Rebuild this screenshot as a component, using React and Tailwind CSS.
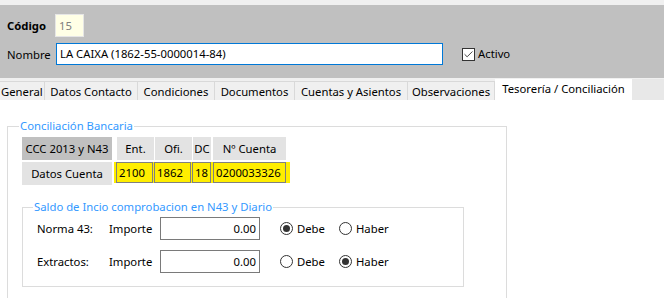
import { Check } from 'lucide-react';

const tabs = [
  { label: 'General', w: 'w-[45px] justify-start pl-[1px]' },
  { label: 'Datos Contacto', w: 'w-[93px] justify-center' },
  { label: 'Condiciones', w: 'w-[77px] justify-center' },
  { label: 'Documentos', w: 'w-[80px] justify-center' },
  { label: 'Cuentas y Asientos', w: 'w-[113px] justify-center' },
  { label: 'Observaciones', w: 'w-[87px] justify-center' },
];

function Radio({ checked, label }) {
  return (
    <div className="flex items-center gap-[4px]">
      <span className="w-[13px] h-[13px] rounded-full border border-[#333] bg-white flex items-center justify-center">
        {checked && <span className="w-[7px] h-[7px] rounded-full bg-[#333]" />}
      </span>
      <span>{label}</span>
    </div>
  );
}

function SaldoRow({ label, debe }) {
  return (
    <div className="flex items-center h-[23px]">
      <span className="w-[72px]">{label}</span>
      <span className="w-[51px]">Importe</span>
      <div className="w-[100px] h-[23px] border border-[#7a7a7a] bg-white flex items-center justify-end pr-[3px]">0.00</div>
      <div className="ml-[20px] w-[59px]">
        <Radio checked={debe} label="Debe" />
      </div>
      <Radio checked={!debe} label="Haber" />
    </div>
  );
}

export default function App() {
  return (
    <div className="w-[664px] h-[298px] overflow-hidden bg-white text-[11.3px] leading-[16px] text-black" style={{ fontFamily: '"Noto Sans", "Open Sans", sans-serif' }}>
      {/* top strip */}
      <div className="h-[5px] bg-[#f0f0f0]" />

      {/* header */}
      <div className="h-[73px] bg-[#c0c0c0] px-[7px] pt-[9px]">
        <div className="flex items-center h-[23px]">
          <span className="w-[48px] font-bold pt-[1px]">Código</span>
          <div className="w-[29px] h-[23px] bg-[#ffffe6] border border-[#e6e6e6] flex items-center pl-[3px] pt-[1px] text-[#808080]">15</div>
        </div>
        <div className="flex items-center h-[22px] mt-[6px]">
          <span className="w-[49px] pt-[1px]">Nombre</span>
          <div className="w-[387px] h-[22px] bg-white border border-[#0078d7] flex items-center pl-[3px]">LA CAIXA (1862-55-0000014-84)</div>
          <div className="ml-[19px] flex items-center gap-[3px]">
            <span className="w-[13px] h-[13px] border border-[#333] bg-white flex items-center justify-center">
              <Check className="w-[11px] h-[11px] text-[#333]" strokeWidth={2} />
            </span>
            <span>Activo</span>
          </div>
        </div>
      </div>

      {/* tabs */}
      <div className="h-[22px] bg-[#f0f0f0] flex items-end">
        <div className="flex">
          {tabs.map((t) => (
            <div key={t.label} className={`${t.w} h-[19px] border-r border-t border-[#d9d9d9] bg-[#f0f0f0] flex items-center pt-[1px]`}>
              {t.label}
            </div>
          ))}
        </div>
        <div className="w-[137px] h-[21px] bg-white flex items-center justify-center pb-[2px]">Tesorería / Conciliación</div>
        <div className="flex-1 h-[21px] bg-[#e8e8e8]" />
      </div>

      {/* content */}
      <div className="pl-[7px] pt-[18px]">
        <fieldset className="w-[500px] h-[200px] border border-[#dcdcdc]">
          <legend className="ml-[11px] px-[1px] text-[#3399ff]">Conciliación Bancaria</legend>
          <div className="pl-[14px] pt-[3px]">
            <div className="flex h-[23px]">
              <div className="w-[90px] bg-[#c0c0c0] flex items-center justify-center">CCC 2013 y N43</div>
              <div className="ml-[5px] w-[37px] bg-[#e3e3e3] flex items-center justify-center">Ent.</div>
              <div className="ml-[1px] w-[37px] bg-[#e3e3e3] flex items-center justify-center">Ofi.</div>
              <div className="ml-[1px] w-[18px] bg-[#e3e3e3] flex items-center justify-center">DC</div>
              <div className="ml-[2px] w-[73px] bg-[#e3e3e3] flex items-center justify-center">Nº Cuenta</div>
            </div>
            <div className="flex h-[23px] mt-[2px]">
              <div className="w-[90px] bg-[#e3e3e3] flex items-center justify-center">Datos Cuenta</div>
              <div className="ml-[2px] w-[176px] h-[21px] bg-[#ffee00] flex items-center gap-[1px] pl-[2px]">
                <div className="w-[37px] h-[21px] border border-[#808080] flex items-center pl-[2px]">2100</div>
                <div className="w-[37px] h-[21px] border border-[#808080] flex items-center pl-[2px]">1862</div>
                <div className="w-[19px] h-[21px] border border-[#808080] flex items-center justify-center">18</div>
                <div className="ml-[1px] w-[73px] h-[21px] border border-[#808080] flex items-center pl-[2px]">0200033326</div>
              </div>
            </div>

            <fieldset className="mt-[14px] w-[442px] h-[88px] border border-[#dcdcdc]">
              <legend className="ml-[10px] px-[1px] text-[#3399ff]">Saldo de Incio comprobacion en N43 y Diario</legend>
              <div className="pl-[14px] pt-[2px] flex flex-col gap-[10px]">
                <SaldoRow label="Norma 43:" debe />
                <SaldoRow label="Extractos:" debe={false} />
              </div>
            </fieldset>
          </div>
        </fieldset>
      </div>
    </div>
  );
}
